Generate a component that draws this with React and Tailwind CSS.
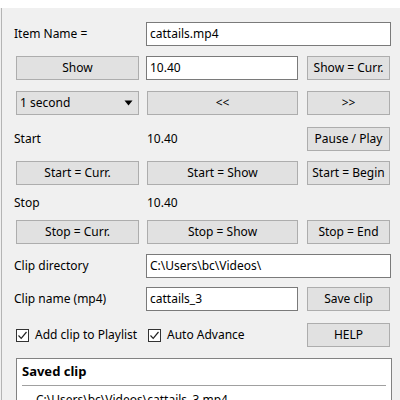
import React from "react";

const font = { fontFamily: '"Segoe UI", "Noto Sans", "DejaVu Sans", sans-serif' };

function Btn({ children, w }) {
  return (
    <div
      className={`${w} h-[24px] shrink-0 bg-[#e1e1e1] border border-[#adadad] flex items-center justify-center text-[12px] text-[#000] leading-none`}
    >
      {children}
    </div>
  );
}

function Box({ children, w }) {
  return (
    <div
      className={`${w} h-[24px] shrink-0 bg-white border border-[#7a7a7a] flex items-center pl-[3px] text-[12px] text-black leading-none`}
    >
      {children}
    </div>
  );
}

function Check({ label, w }) {
  return (
    <div className={`${w} h-[24px] shrink-0 flex items-center gap-[6px] text-[12px]`}>
      <div className="w-[13px] h-[13px] bg-white border border-[#333] flex items-center justify-center">
        <svg width="11" height="11" viewBox="0 0 11 11">
          <path d="M1.5 5.5 L4.2 8.3 L9.5 2" fill="none" stroke="#222" strokeWidth="1.2" />
        </svg>
      </div>
      <span>{label}</span>
    </div>
  );
}

function Label({ children, w }) {
  return (
    <div className={`${w} h-[24px] shrink-0 flex items-center text-[12px] text-black`}>{children}</div>
  );
}

export default function App() {
  return (
    <div className="w-[400px] h-[400px] overflow-hidden bg-[#f0f0f0] flex flex-col" style={font}>
      <div className="h-[8px] bg-white shrink-0" />
      <div className="flex-1 ml-[1px] border-l border-[#b4b4b4] flex flex-col pl-[12px] pt-[14px]">
        {/* Row 1 */}
        <div className="flex h-[24px]">
          <Label w="w-[132px]">Item Name =</Label>
          <Box w="w-[245px]">cattails.mp4</Box>
        </div>
        {/* Row 2 */}
        <div className="flex h-[24px] mt-[10px] pl-[2px]">
          <Btn w="w-[123px]">Show</Btn>
          <div className="w-[7px]" />
          <Box w="w-[152px]">10.40</Box>
          <div className="w-[9px]" />
          <Btn w="w-[83px]">Show = Curr.</Btn>
        </div>
        {/* Row 3 */}
        <div className="flex h-[24px] mt-[11px] pl-[2px]">
          <div className="w-[123px] h-[24px] shrink-0 bg-[#e1e1e1] border border-[#adadad] flex items-center justify-between pl-[3px] pr-[5px] text-[12px]">
            <span>1 second</span>
            <svg width="9" height="6" viewBox="0 0 9 6">
              <path d="M0.5 0.5 L8.5 0.5 L4.5 5.5 Z" fill="#000" />
            </svg>
          </div>
          <div className="w-[8px]" />
          <Btn w="w-[151px]">&lt;&lt;</Btn>
          <div className="w-[9px]" />
          <Btn w="w-[83px]">&gt;&gt;</Btn>
        </div>
        {/* Row 4 */}
        <div className="flex h-[24px] mt-[12px]">
          <Label w="w-[133px]">Start</Label>
          <Label w="w-[160px]">10.40</Label>
          <Btn w="w-[83px]">Pause / Play</Btn>
        </div>
        {/* Row 5 */}
        <div className="flex h-[24px] mt-[10px] pl-[2px]">
          <Btn w="w-[123px]">Start = Curr.</Btn>
          <div className="w-[8px]" />
          <Btn w="w-[151px]">Start = Show</Btn>
          <div className="w-[9px]" />
          <Btn w="w-[83px]">Start = Begin</Btn>
        </div>
        {/* Row 6 */}
        <div className="flex h-[24px] mt-[6px]">
          <Label w="w-[133px]">Stop</Label>
          <Label w="w-[160px]">10.40</Label>
        </div>
        {/* Row 7 */}
        <div className="flex h-[24px] mt-[5px] pl-[2px]">
          <Btn w="w-[123px]">Stop = Curr.</Btn>
          <div className="w-[8px]" />
          <Btn w="w-[151px]">Stop = Show</Btn>
          <div className="w-[9px]" />
          <Btn w="w-[83px]">Stop = End</Btn>
        </div>
        {/* Row 8 */}
        <div className="flex h-[24px] mt-[10px]">
          <Label w="w-[132px]">Clip directory</Label>
          <Box w="w-[245px]">C:\Users\bc\Videos\</Box>
        </div>
        {/* Row 9 */}
        <div className="flex h-[24px] mt-[9px]">
          <Label w="w-[132px]">Clip name (mp4)</Label>
          <Box w="w-[152px]">cattails_3</Box>
          <div className="w-[9px]" />
          <Btn w="w-[83px]">Save clip</Btn>
        </div>
        {/* Row 10 */}
        <div className="flex h-[24px] mt-[12px] pl-[2px]">
          <Check w="w-[132px]" label="Add clip to Playlist" />
          <Check w="w-[159px]" label="Auto Advance" />
          <Btn w="w-[83px]">HELP</Btn>
        </div>
        {/* Saved clip box */}
        <div className="mt-[11px] ml-[2px] w-[376px] h-[60px] shrink-0 bg-white border border-[#828282] px-[5px]">
          <div className="pt-[3px] text-[13px] font-bold leading-[18px]">Saved clip</div>
          <div className="mt-[5px] h-[1px] bg-[#a0a0a0]" />
          <div className="mt-[6px] pl-[14px] text-[12px] leading-[16px]">C:\Users\bc\Videos\cattails_3.mp4</div>
        </div>
      </div>
    </div>
  );
}
